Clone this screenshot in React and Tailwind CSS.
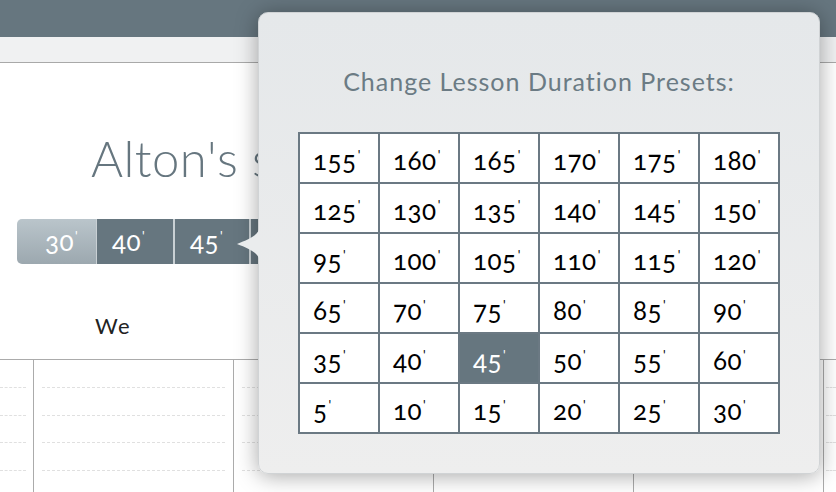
import React from "react";

const rows = [
  [155, 160, 165, 170, 175, 180],
  [125, 130, 135, 140, 145, 150],
  [95, 100, 105, 110, 115, 120],
  [65, 70, 75, 80, 85, 90],
  [35, 40, 45, 50, 55, 60],
  [5, 10, 15, 20, 25, 30],
];

function Min({ n, className = "" }) {
  return (
    <span className={"oldstyle-nums tracking-[0.5px] " + className}>
      {n}
      <span className="relative -top-[10px] ml-[1px] text-[13px]">'</span>
    </span>
  );
}

function DashedCol({ width, pad, border }) {
  return (
    <div className={`${width} ${border ? "border-l border-[#ababab]" : ""} ${pad} flex flex-col`}>
      {[0, 1, 2, 3, 4].map((i) => (
        <div key={i} className="h-[28px] border-b border-dashed border-[#e0e0e0]" />
      ))}
    </div>
  );
}

export default function App() {
  return (
    <div
      className="relative w-[836px] h-[492px] overflow-hidden bg-white"
      style={{ fontFamily: "Lato, 'Noto Sans', sans-serif" }}
    >
      <div className="h-[37px] bg-[#66767f]" />
      <div className="h-[26px] bg-[#f0f1f2] border-b border-[#a9a9a9]" />

      <div className="h-[296px] flex flex-col">
        <div className="pt-[71px] pl-[91px] text-[49px] leading-none font-light text-[#66767f] whitespace-nowrap tracking-[0.5px]">
          Alton's s
        </div>
        <div className="mt-[36px] ml-[17px] flex h-[45px] w-[300px] text-white text-[26px]">
          <div className="w-[79px] rounded-l-[5px] bg-gradient-to-b from-[#bac5cb] to-[#9ca8af] flex items-center pl-[28px]">
            <Min n={30} />
          </div>
          <div className="w-[1px] bg-[#c9d0d4]" />
          <div className="w-[76px] bg-[#66767f] flex items-center pl-[15px]">
            <Min n={40} />
          </div>
          <div className="w-[2px] bg-[#c9d0d4]" />
          <div className="w-[74px] bg-[#66767f] flex items-center pl-[15px]">
            <Min n={45} />
          </div>
          <div className="w-[2px] bg-[#c9d0d4]" />
          <div className="w-[40px] bg-[#66767f]" />
        </div>
        <div className="mt-[51px] pl-[95px] text-[22px] leading-none text-[#222] tracking-[1.5px]">We</div>
      </div>

      <div className="border-t border-[#ababab] flex h-[140px]">
        <DashedCol width="w-[33px]" pad="pr-[7px]" />
        <DashedCol width="w-[200px]" pad="px-[8px]" border />
        <DashedCol width="w-[200px]" pad="px-[8px]" border />
        <DashedCol width="w-[200px]" pad="px-[8px]" border />
        <DashedCol width="w-[190px]" pad="px-[8px]" border />
        <DashedCol width="w-[13px]" pad="pl-[2px]" border />
      </div>

      {/* Popover */}
      <div className="absolute left-[258px] top-[12px] w-[562px] h-[462px] rounded-[10px] bg-gradient-to-b from-[#e5e8ea] to-[#eeeeee] shadow-[0_2px_22px_rgba(0,0,0,0.35)] border border-[#d0d3d5]">
        <svg
          className="absolute left-[-23px] top-[213px]"
          width="24"
          height="36"
          viewBox="0 0 24 36"
        >
          <path d="M24 0 C23 9, 14 13, 1 18 C14 23, 23 27, 24 36 Z" fill="#eaeced" />
        </svg>
        <div className="pt-[56px] text-center text-[25px] leading-none text-[#6b7b84] tracking-[1px]">
          Change Lesson Duration Presets:
        </div>
        <div className="mt-[38px] ml-[39px] w-[482px] grid grid-cols-6 gap-[2px] p-[2px] bg-[#6b7983]">
          {rows.flat().map((n, i) => {
            const sel = i === 26;
            return (
              <div
                key={i}
                className={`h-[48px] flex items-center pl-[13px] pt-[5px] text-[26px] ${
                  sel ? "bg-[#66767f] text-white" : "bg-white text-black"
                }`}
              >
                <Min n={n} />
              </div>
            );
          })}
        </div>
      </div>
    </div>
  );
}
